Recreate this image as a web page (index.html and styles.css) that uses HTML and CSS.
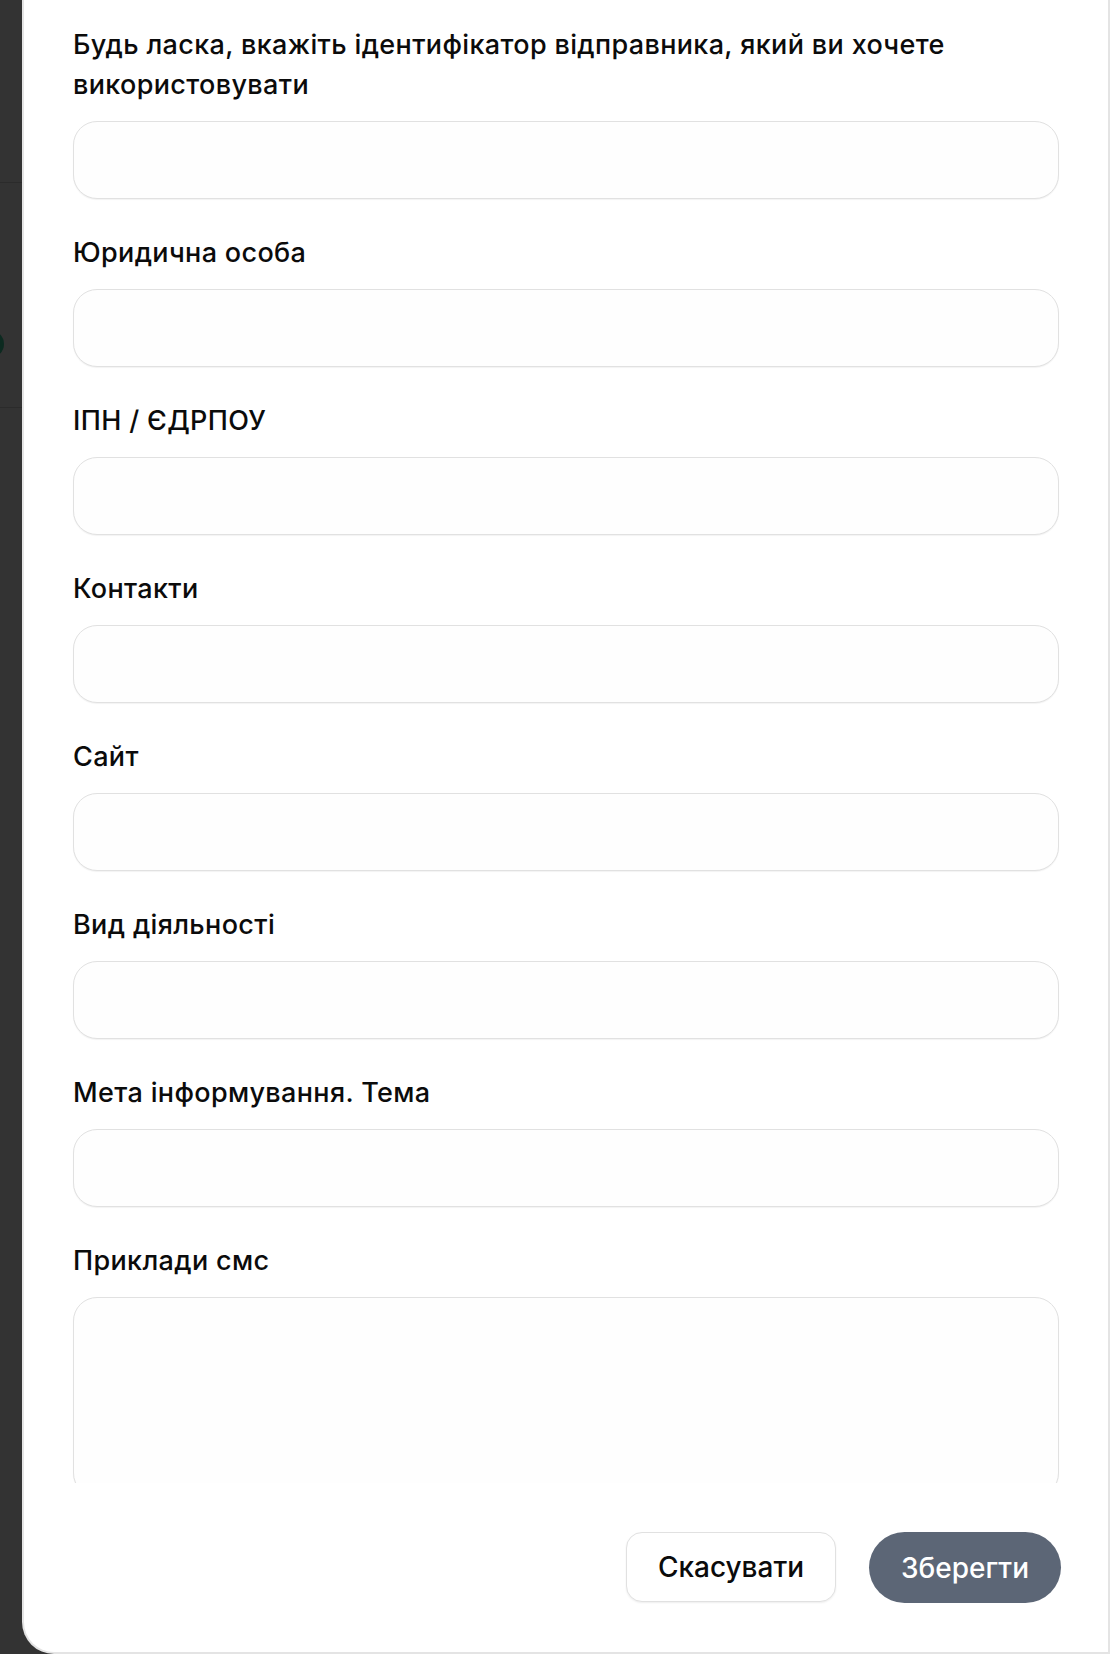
FILE: index.html
```html
<!DOCTYPE html>
<html lang="uk">
<head>
<meta charset="utf-8">
<title>Ідентифікатор відправника</title>
<link rel="stylesheet" href="styles.css">
</head>
<body>
<div class="screen">
  <div class="backdrop">
    <div class="bd-row bd-top"></div>
    <div class="bd-row bd-mid"><span class="bd-dot"></span></div>
    <div class="bd-row bd-rest"></div>
  </div>
  <div class="panel">
    <div class="scroll">
      <form class="form">
        <div class="field">
          <label class="label">Будь ласка, вкажіть ідентифікатор відправника, який ви хочете використовувати</label>
          <input class="input" type="text">
        </div>
        <div class="field">
          <label class="label">Юридична особа</label>
          <input class="input" type="text">
        </div>
        <div class="field">
          <label class="label">ІПН / ЄДРПОУ</label>
          <input class="input" type="text">
        </div>
        <div class="field">
          <label class="label">Контакти</label>
          <input class="input" type="text">
        </div>
        <div class="field">
          <label class="label">Сайт</label>
          <input class="input" type="text">
        </div>
        <div class="field">
          <label class="label">Вид діяльності</label>
          <input class="input" type="text">
        </div>
        <div class="field">
          <label class="label">Мета інформування. Тема</label>
          <input class="input" type="text">
        </div>
        <div class="field">
          <label class="label">Приклади смс</label>
          <textarea class="textarea"></textarea>
        </div>
      </form>
    </div>
    <div class="footer">
      <button class="btn btn-cancel" type="button">Скасувати</button>
      <button class="btn btn-save" type="button">Зберегти</button>
    </div>
  </div>
</div>
</body>
</html>
```
FILE: styles.css
```css
html, body {
  margin: 0;
  padding: 0;
}
body {
  width: 1110px;
  height: 1654px;
  overflow: hidden;
  background: #333333;
  font-family: Inter, "Liberation Sans", Arial, sans-serif;
  color: #0b0b0b;
}
.screen {
  display: flex;
  width: 1110px;
  height: 1654px;
}
.backdrop {
  width: 22px;
  flex: none;
  display: flex;
  flex-direction: column;
  background: #333333;
  overflow: hidden;
}
.bd-row {
  border-bottom: 1px solid #2b2b2b;
}
.bd-top {
  height: 182px;
}
.bd-mid {
  height: 225px;
  display: flex;
  padding-top: 147px;
  box-sizing: border-box;
}
.bd-dot {
  width: 28px;
  height: 28px;
  border-radius: 50%;
  background: #0c2a20;
  margin-left: -24px;
}
.bd-rest {
  flex: 1;
  border-bottom: none;
}
.panel {
  flex: 1;
  display: flex;
  flex-direction: column;
  background: #ffffff;
  border: 2px solid #e4e4e4;
  border-top: none;
  border-bottom-left-radius: 32px;
  min-width: 0;
}
.scroll {
  height: 1483px;
  flex: none;
  overflow: hidden;
  padding: 25px 49px 0 49px;
  box-sizing: border-box;
}
.form {
  display: flex;
  flex-direction: column;
  gap: 34px;
}
.field {
  display: flex;
  flex-direction: column;
  gap: 16px;
}
.label {
  font-size: 27px;
  font-weight: 500;
  line-height: 40px;
  letter-spacing: 0.35px;
}
.input,
.textarea {
  display: block;
  box-sizing: border-box;
  width: 100%;
  height: 78px;
  margin: 0;
  border: 1.5px solid #e1e1e1;
  border-radius: 24px;
  background: #fefefe;
  box-shadow: 0 1px 1px rgba(0, 0, 0, 0.05);
  font-family: inherit;
  font-size: 24px;
  outline: none;
  padding: 0 24px;
}
.textarea {
  height: 200px;
  resize: none;
  padding: 20px 24px;
}
.footer {
  flex: 1;
  display: flex;
  justify-content: flex-end;
  align-items: flex-start;
  gap: 33px;
  padding: 49px 47px 0 49px;
}
.btn {
  font-family: inherit;
  font-size: 28px;
  font-weight: 500;
  line-height: 32px;
  cursor: pointer;
  margin: 0;
  padding: 0;
  box-sizing: border-box;
}
.btn-cancel {
  width: 210px;
  height: 70px;
  background: #ffffff;
  color: #0b0b0b;
  border: 1.5px solid #e1e1e1;
  border-radius: 16px;
  box-shadow: 0 1px 2px rgba(0, 0, 0, 0.07);
}
.btn-save {
  width: 192px;
  height: 71px;
  background: #5c6676;
  color: #ffffff;
  border: none;
  border-radius: 36px;
}
```
